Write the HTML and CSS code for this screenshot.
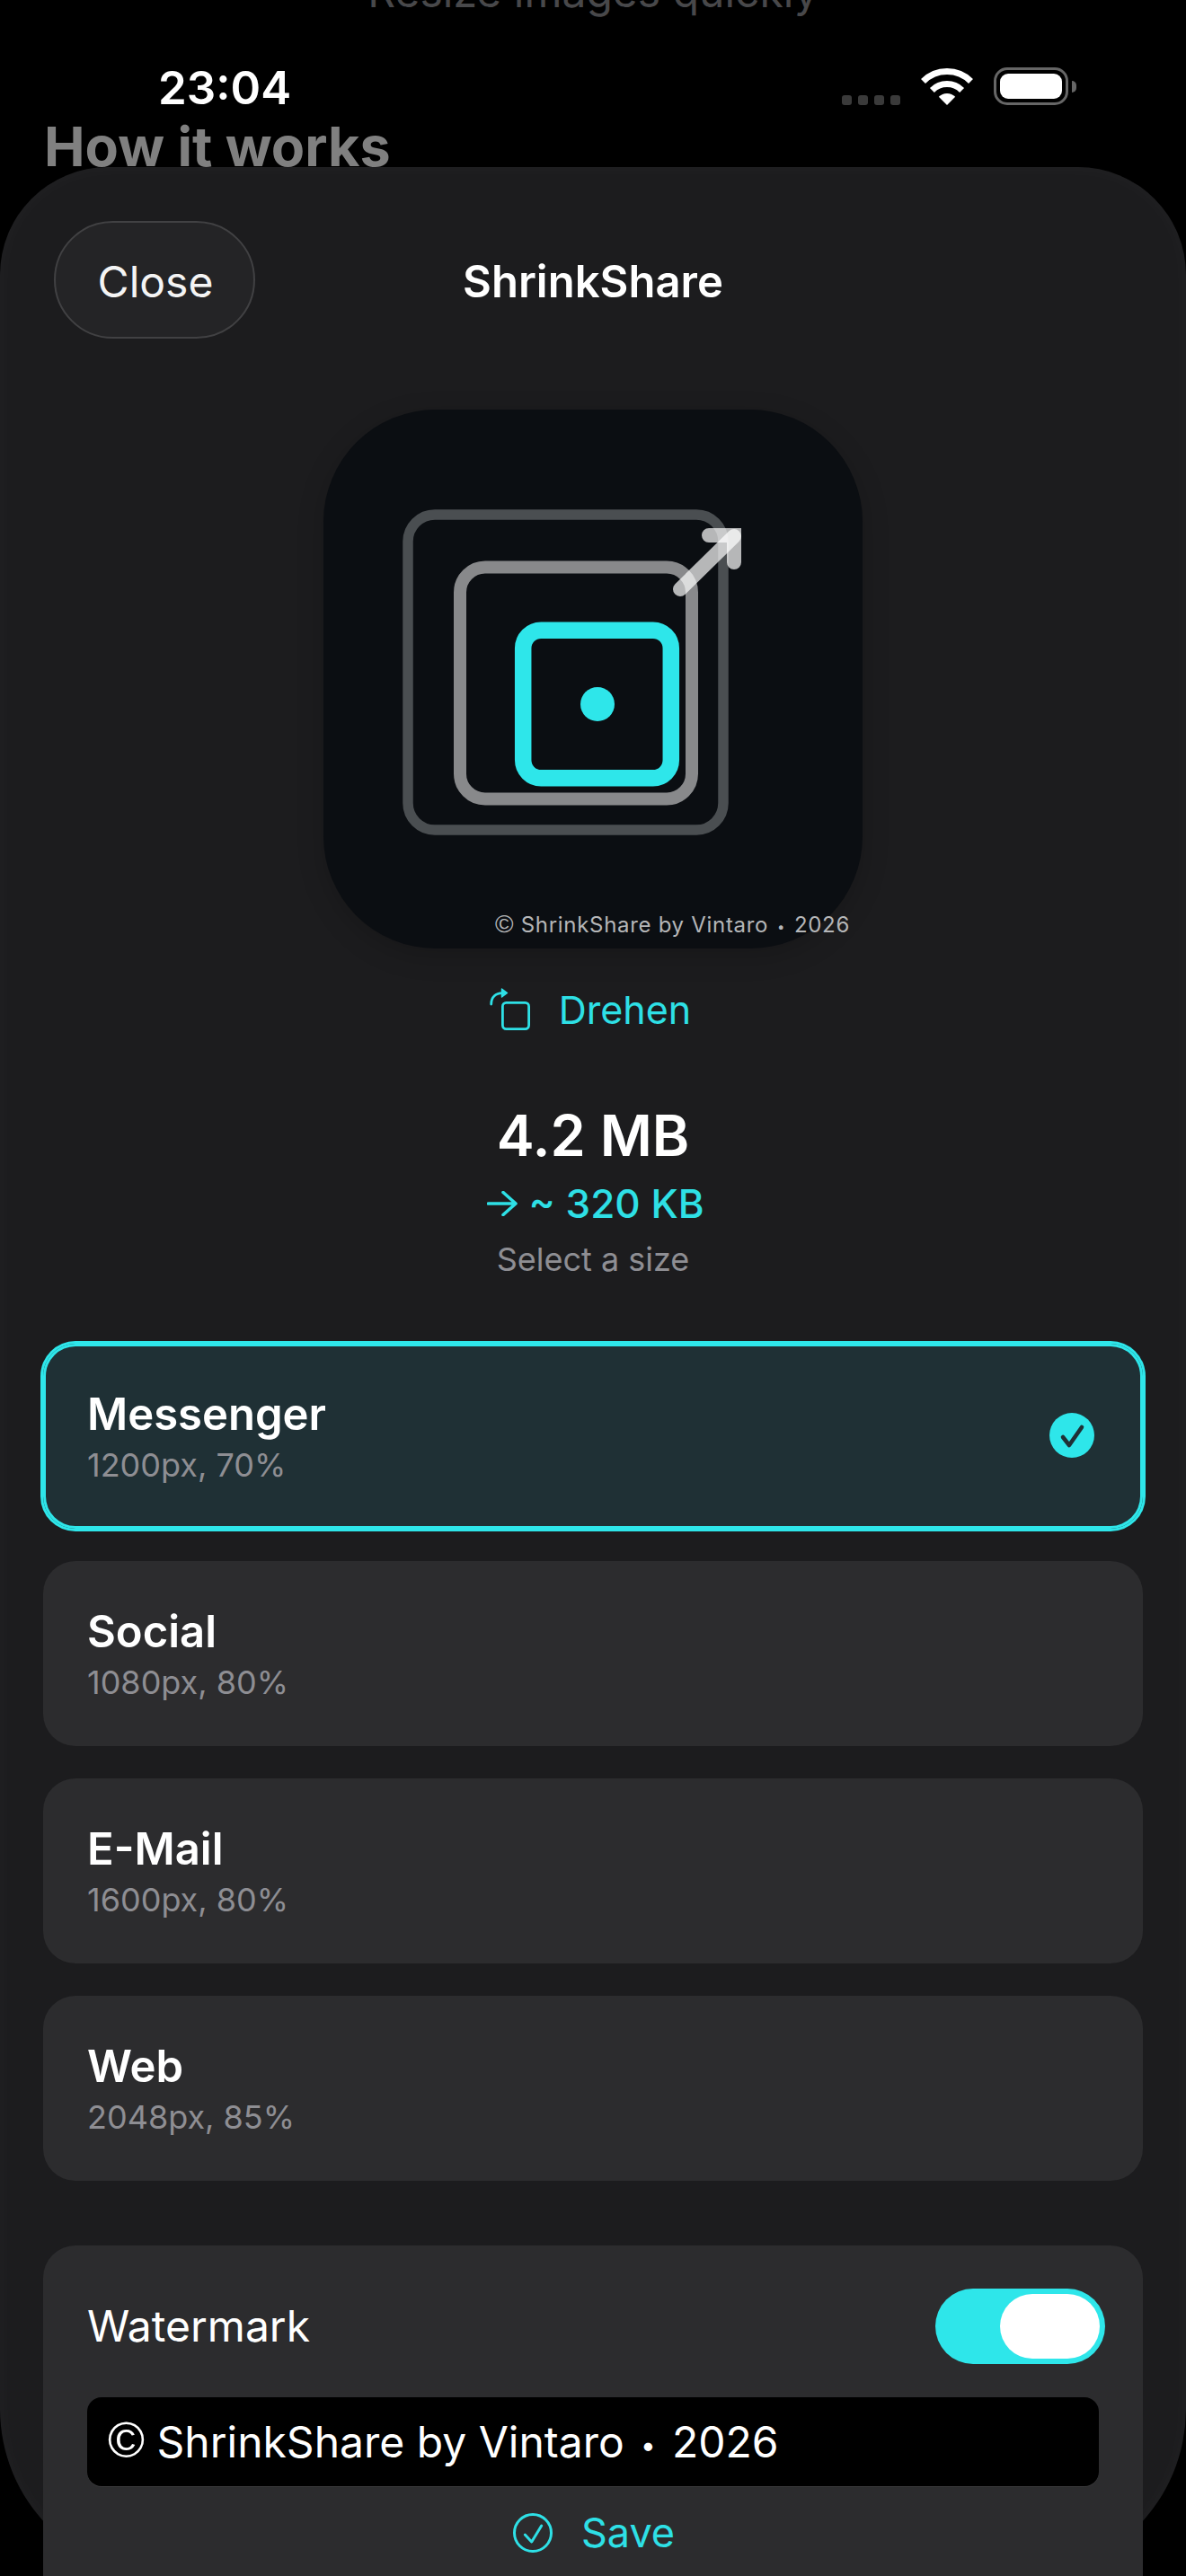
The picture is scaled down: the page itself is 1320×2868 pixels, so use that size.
FILE: index.html
```html
<!DOCTYPE html>
<html lang="en">
<head>
    <meta charset="UTF-8">
    <meta name="viewport" content="width=device-width, initial-scale=1.0">
    <title>ShrinkShare</title>
    <link rel="stylesheet" href="styles.css">
</head>
<body>
    <!-- Page behind the sheet -->
    <p class="tagline">Resize images quickly</p>
    <div class="status-bar">
        <span class="clock">23:04</span>
        <div class="status-icons">
            <div class="signal"><i></i><i></i><i></i><i></i></div>
            <svg class="wifi" viewBox="0 0 58 42">
                <path d="M2.5 14.5A37.5 37.5 0 0 1 55.5 14.5" fill="none" stroke="#fff" stroke-width="7"/>
                <path d="M12.4 24.4A23.5 23.5 0 0 1 45.6 24.4" fill="none" stroke="#fff" stroke-width="7"/>
                <path d="M29 41L19.8 31.8A13 13 0 0 1 38.2 31.8Z" fill="#fff"/>
            </svg>
            <div class="battery"><div class="battery-level"></div></div>
            <div class="battery-nub"></div>
        </div>
    </div>
    <h2 class="behind-title">How it works</h2>

    <!-- Sheet -->
    <div class="sheet">
        <div class="sheet-header">
            <button class="close-button">Close</button>
            <h1 class="sheet-title">ShrinkShare</h1>
        </div>

        <div class="preview">
            <svg class="preview-art" viewBox="0 0 600 600">
                <rect x="94" y="117" width="351" height="351" rx="30" fill="none" stroke="#4a4e51" stroke-width="11.5"/>
                <rect x="152" y="175.5" width="258" height="258" rx="28" fill="none" stroke="#88898b" stroke-width="14"/>
                <rect x="222.2" y="245.7" width="164.6" height="164.6" rx="20" fill="none" stroke="#2ee6ea" stroke-width="18.5"/>
                <circle cx="305" cy="328" r="19" fill="#2ee6ea"/>
                <g stroke="#fff" stroke-opacity="0.7" stroke-width="16" stroke-linecap="round" fill="none">
                    <path d="M397 200L457 141"/>
                    <path d="M429 140H457V170" stroke-linejoin="miter"/>
                </g>
            </svg>
            <span class="preview-mark"><span class="copyright">©</span> ShrinkShare by Vintaro <span class="bullet">•</span> 2026</span>
        </div>

        <div class="rotate-row">
            <svg class="rotate-icon" viewBox="0 0 48 48">
                <rect x="16.4" y="16.4" width="29.2" height="29.2" rx="4" fill="none" stroke="#2ee0e6" stroke-width="2.8"/>
                <path d="M3.7 18C3.7 10 9 5.7 16 5.7" fill="none" stroke="#2ee0e6" stroke-width="2.8" stroke-linecap="round"/>
                <path d="M15.5 1L21.5 5.5L15.5 10Z" fill="#2ee0e6" stroke="#2ee0e6" stroke-width="1.5" stroke-linejoin="round"/>
            </svg>
            <span>Drehen</span>
        </div>

        <div class="size-summary">
            <div class="size-original">4.2 MB</div>
            <div class="size-result">
                <svg class="result-arrow" viewBox="0 0 34 28">
                    <path d="M1.5 14H31.5M18 1.5L32 14L18 26.5" fill="none" stroke="#2ee0e6" stroke-width="3.6" stroke-linecap="round" stroke-linejoin="round"/>
                </svg>
                <span>~ 320 KB</span>
            </div>
            <div class="size-hint">Select a size</div>
        </div>

        <div class="presets">
            <div class="preset selected">
                <div>
                    <div class="preset-name">Messenger</div>
                    <div class="preset-detail">1200px, 70%</div>
                </div>
                <svg class="preset-check" viewBox="0 0 50 50">
                    <circle cx="25" cy="25" r="25" fill="#2ee6ea"/>
                    <path d="M15 27L22 36L36 16" fill="none" stroke="#1f3035" stroke-width="4.6" stroke-linecap="round" stroke-linejoin="round"/>
                </svg>
            </div>
            <div class="preset">
                <div>
                    <div class="preset-name">Social</div>
                    <div class="preset-detail">1080px, 80%</div>
                </div>
            </div>
            <div class="preset">
                <div>
                    <div class="preset-name">E-Mail</div>
                    <div class="preset-detail">1600px, 80%</div>
                </div>
            </div>
            <div class="preset">
                <div>
                    <div class="preset-name">Web</div>
                    <div class="preset-detail">2048px, 85%</div>
                </div>
            </div>
        </div>

        <div class="watermark-card">
            <div class="watermark-row">
                <span class="watermark-label">Watermark</span>
                <div class="toggle"><div class="toggle-thumb"></div></div>
            </div>
            <div class="watermark-input"><span class="copyright">©</span> ShrinkShare by Vintaro <span class="bullet">•</span> 2026</div>
            <div class="save-row">
                <svg class="save-icon" viewBox="0 0 48 48">
                    <circle cx="24" cy="24" r="20.5" fill="none" stroke="#2ee0e6" stroke-width="3"/>
                    <path d="M15.3 26L22.7 34L33.7 16" fill="none" stroke="#2ee0e6" stroke-width="3" stroke-linecap="round" stroke-linejoin="round"/>
                </svg>
                <span>Save</span>
            </div>
        </div>
    </div>
</body>
</html>
```

FILE: styles.css
```css
* {
    box-sizing: border-box;
}
html, body {
    margin: 0;
    height: 2868px;
    overflow: hidden;
}
body {
    position: relative;
    background: #000;
    color: #fff;
    font-family: Inter, "Noto Sans", sans-serif;
}

/* behind the sheet */
.tagline {
    margin: -38px 0 0;
    height: 58px;
    line-height: 58px;
    text-align: center;
    font-size: 48px;
    color: #48484a;
}
.status-bar {
    display: flex;
    justify-content: space-between;
    align-items: flex-start;
    height: 56px;
    margin-top: 50px;
    padding: 0 122px 0 176px;
}
.clock {
    font-size: 51px;
    font-weight: 600;
    line-height: 56px;
}
.status-icons {
    display: flex;
    align-items: flex-start;
    padding-top: 5px;
}
.signal {
    display: flex;
    gap: 7px;
    margin: 31px 23px 0 0;
}
.signal i {
    display: block;
    width: 11px;
    height: 11px;
    border-radius: 3px;
    background: #3a3a3a;
}
.wifi {
    width: 58px;
    height: 42px;
    margin: 1px 23px 0 0;
}
.battery {
    width: 83px;
    height: 42px;
    padding: 4px;
    border: 3px solid #666;
    border-radius: 15px;
}
.battery-level {
    height: 100%;
    background: #fff;
    border-radius: 9px;
}
.battery-nub {
    width: 5px;
    height: 13px;
    margin: 15px 0 0 4px;
    background: #666;
    border-radius: 0 5px 5px 0;
}
.behind-title {
    margin: 2px 0 0;
    padding-left: 49px;
    font-size: 61px;
    font-weight: 700;
    line-height: 70px;
    color: #808080;
}

/* sheet */
.sheet {
    position: absolute;
    top: 186px;
    left: 0;
    right: 0;
    height: 2682px;
    padding: 60px 48px 0;
    background: #1c1c1e;
    border-radius: 120px 120px 186px 186px;
    box-shadow: inset 0 0 24px rgba(255, 255, 255, 0.03);
}
.sheet-header {
    position: relative;
    display: flex;
    justify-content: center;
    align-items: center;
    height: 131px;
    padding-top: 3px;
}
.close-button {
    position: absolute;
    left: 12px;
    top: 0;
    width: 224px;
    height: 131px;
    padding: 3px 0 0 2px;
    border: 2px solid #414143;
    border-radius: 66px;
    background: #242426;
    color: #f4f4f4;
    font-family: inherit;
    font-size: 48px;
}
.sheet-title {
    margin: 0;
    font-size: 49px;
    font-weight: 600;
}
.preview {
    position: relative;
    width: 600px;
    height: 600px;
    margin: 79px auto 0;
    border-radius: 125px;
    background: #0b0e12;
    box-shadow: 0 8px 30px rgba(0, 0, 0, 0.18);
}
.preview-art {
    display: block;
    width: 600px;
    height: 600px;
}
.preview-mark {
    position: absolute;
    right: 14px;
    bottom: 12px;
    font-size: 24px;
    letter-spacing: 0.7px;
    color: #b5b6b8;
}
.copyright {
    font-family: "Liberation Sans", sans-serif;
    font-size: 1.16em;
    line-height: 1;
}
.bullet {
    margin: 0 0.16em;
    font-size: 0.62em;
    line-height: 1;
    vertical-align: 0.1em;
}
.rotate-row {
    display: flex;
    justify-content: center;
    align-items: center;
    gap: 31px;
    margin-top: 38px;
    height: 60px;
    padding-right: 8px;
    font-size: 43px;
    color: #2ee0e6;
}
.rotate-icon {
    width: 48px;
    height: 48px;
}
.size-summary {
    margin-top: 71px;
    text-align: center;
}
.size-original {
    font-size: 63px;
    font-weight: 600;
    line-height: 78px;
}
.size-result {
    display: flex;
    justify-content: center;
    align-items: center;
    gap: 12px;
    height: 56px;
    margin-top: 9px;
    padding-left: 6px;
    font-size: 44px;
    font-weight: 500;
    color: #2ee0e6;
}
.result-arrow {
    width: 34px;
    height: 28px;
}
.size-hint {
    margin-top: 12px;
    font-size: 36px;
    line-height: 44px;
    color: #8e8e93;
}

/* presets */
.presets {
    display: flex;
    flex-direction: column;
    gap: 36px;
    margin-top: 72px;
}
.preset {
    display: flex;
    justify-content: space-between;
    align-items: center;
    height: 206px;
    padding: 0 54px 0 49px;
    border-radius: 36px;
    background: #2c2c2e;
}
.preset.selected {
    background: #1f3035;
    box-shadow: 0 0 0 3px #2ee6ea, inset 0 0 0 3px #2ee6ea;
}
.preset-name {
    font-size: 49px;
    font-weight: 600;
    line-height: 58px;
}
.preset-detail {
    margin-top: 5px;
    font-size: 36px;
    line-height: 44px;
    color: #8e8e93;
}
.preset-check {
    width: 50px;
    height: 50px;
    margin-bottom: 2px;
}

/* watermark */
.watermark-card {
    margin-top: 72px;
    padding: 48px 49px 80px 49px;
    border-radius: 36px;
    background: #2c2c2e;
}
.watermark-row {
    display: flex;
    justify-content: space-between;
    align-items: center;
    margin-right: -7px;
}
.watermark-label {
    margin-top: -2px;
    font-size: 48px;
}
.toggle {
    display: flex;
    justify-content: flex-end;
    align-items: center;
    width: 189px;
    height: 84px;
    padding: 0 6px;
    border-radius: 42px;
    background: #2ee6ea;
}
.toggle-thumb {
    width: 111px;
    height: 72px;
    border-radius: 36px;
    background: #fff;
}
.watermark-input {
    height: 99px;
    margin-top: 37px;
    padding-left: 23px;
    border-radius: 16px;
    background: #000;
    box-shadow: 0 1px 0 #3a3a3c;
    font-size: 48px;
    line-height: 99px;
}
.save-row {
    display: flex;
    justify-content: center;
    align-items: center;
    gap: 30px;
    margin-top: 24px;
    font-size: 45px;
    color: #2ee0e6;
}
.save-icon {
    width: 48px;
    height: 48px;
}
```
